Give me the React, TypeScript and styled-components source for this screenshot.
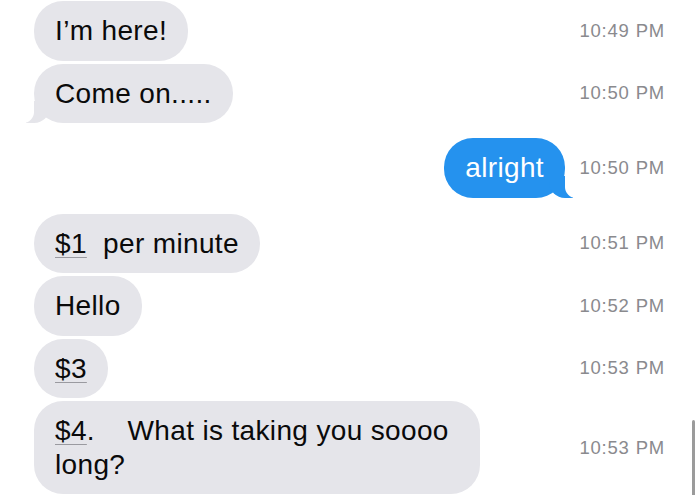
import React from "react";
import styled, { createGlobalStyle, css } from "styled-components";

const Global = createGlobalStyle`
  html, body { margin: 0; padding: 0; background: #ffffff; }
  body { width: 700px; height: 495px; overflow: hidden; }
`;

const Thread = styled.div`
  position: relative;
  box-sizing: border-box;
  width: 700px;
  height: 495px;
  padding: 1px 35px 0 34px;
  display: flex;
  flex-direction: column;
  font-family: "Liberation Sans", Arial, sans-serif;
`;

const Row = styled.div<{ $gapTop?: number }>`
  display: grid;
  grid-template-columns: 1fr 87px;
  column-gap: 13px;
  align-items: center;
  margin-top: ${(p) => p.$gapTop ?? 3}px;
  &:first-child { margin-top: 0; }
`;

const BubbleCell = styled.div<{ $out?: boolean }>`
  display: flex;
  justify-content: ${(p) => (p.$out ? "flex-end" : "flex-start")};
`;

const Bubble = styled.div<{ $out?: boolean; $tail?: boolean }>`
  position: relative;
  box-sizing: border-box;
  max-width: 446px;
  padding: 13px 21px 13px 21px;
  border-radius: 29px;
  font-size: 28px;
  letter-spacing: 0.35px;
  line-height: 33.5px;
  white-space: pre-wrap;
  color: ${(p) => (p.$out ? "#ffffff" : "#0a0a0a")};
  background: ${(p) => (p.$out ? "#2592ee" : "#e5e5ea")};

  ${(p) =>
    p.$tail &&
    !p.$out &&
    css`
      &::before {
        content: "";
        position: absolute;
        bottom: 0;
        left: -8px;
        width: 24px;
        height: 22px;
        background: #e5e5ea;
        border-bottom-right-radius: 16px;
      }
      &::after {
        content: "";
        position: absolute;
        bottom: 0;
        left: -14px;
        width: 14px;
        height: 24px;
        background: #ffffff;
        border-bottom-right-radius: 11px;
      }
    `}

  ${(p) =>
    p.$tail &&
    p.$out &&
    css`
      &::before {
        content: "";
        position: absolute;
        bottom: 0;
        right: -8px;
        width: 24px;
        height: 22px;
        background: #2592ee;
        border-bottom-left-radius: 16px;
      }
      &::after {
        content: "";
        position: absolute;
        bottom: 0;
        right: -14px;
        width: 14px;
        height: 24px;
        background: #ffffff;
        border-bottom-left-radius: 11px;
      }
    `}
`;

const BubbleText = styled.span`
  position: relative;
  z-index: 1;
`;

const Money = styled.span`
  text-decoration: underline;
  text-decoration-color: #9a9aa0;
  text-decoration-thickness: 1px;
  text-underline-offset: 4px;
`;

const Time = styled.div`
  text-align: right;
  font-size: 18.5px;
  letter-spacing: 0.8px;
  color: #8a8a8e;
  white-space: nowrap;
`;

const ScrollThumb = styled.div`
  position: absolute;
  right: 5px;
  top: 420px;
  width: 3px;
  height: 80px;
  border-radius: 2px;
  background: #9b9b9b;
`;

type Msg = {
  body: React.ReactNode;
  time: string;
  out?: boolean;
  tail?: boolean;
  gapTop?: number;
};

const messages: Msg[] = [
  { body: "I’m here!", time: "10:49 PM" },
  { body: "Come on.....", time: "10:50 PM", tail: true },
  { body: "alright", time: "10:50 PM", out: true, tail: true, gapTop: 15 },
  {
    body: (
      <>
        <Money>$1</Money>
        {"  per minute"}
      </>
    ),
    time: "10:51 PM",
    gapTop: 16,
  },
  { body: "Hello", time: "10:52 PM" },
  { body: <Money>$3</Money>, time: "10:53 PM" },
  {
    body: (
      <>
        <Money>$4</Money>
        {".    What is taking you soooo long?"}
      </>
    ),
    time: "10:53 PM",
  },
];

export default function App() {
  return (
    <>
      <Global />
      <Thread>
        {messages.map((m, i) => (
          <Row key={i} $gapTop={m.gapTop}>
            <BubbleCell $out={m.out}>
              <Bubble $out={m.out} $tail={m.tail}>
                <BubbleText>{m.body}</BubbleText>
              </Bubble>
            </BubbleCell>
            <Time>{m.time}</Time>
          </Row>
        ))}
        <ScrollThumb />
      </Thread>
    </>
  );
}
